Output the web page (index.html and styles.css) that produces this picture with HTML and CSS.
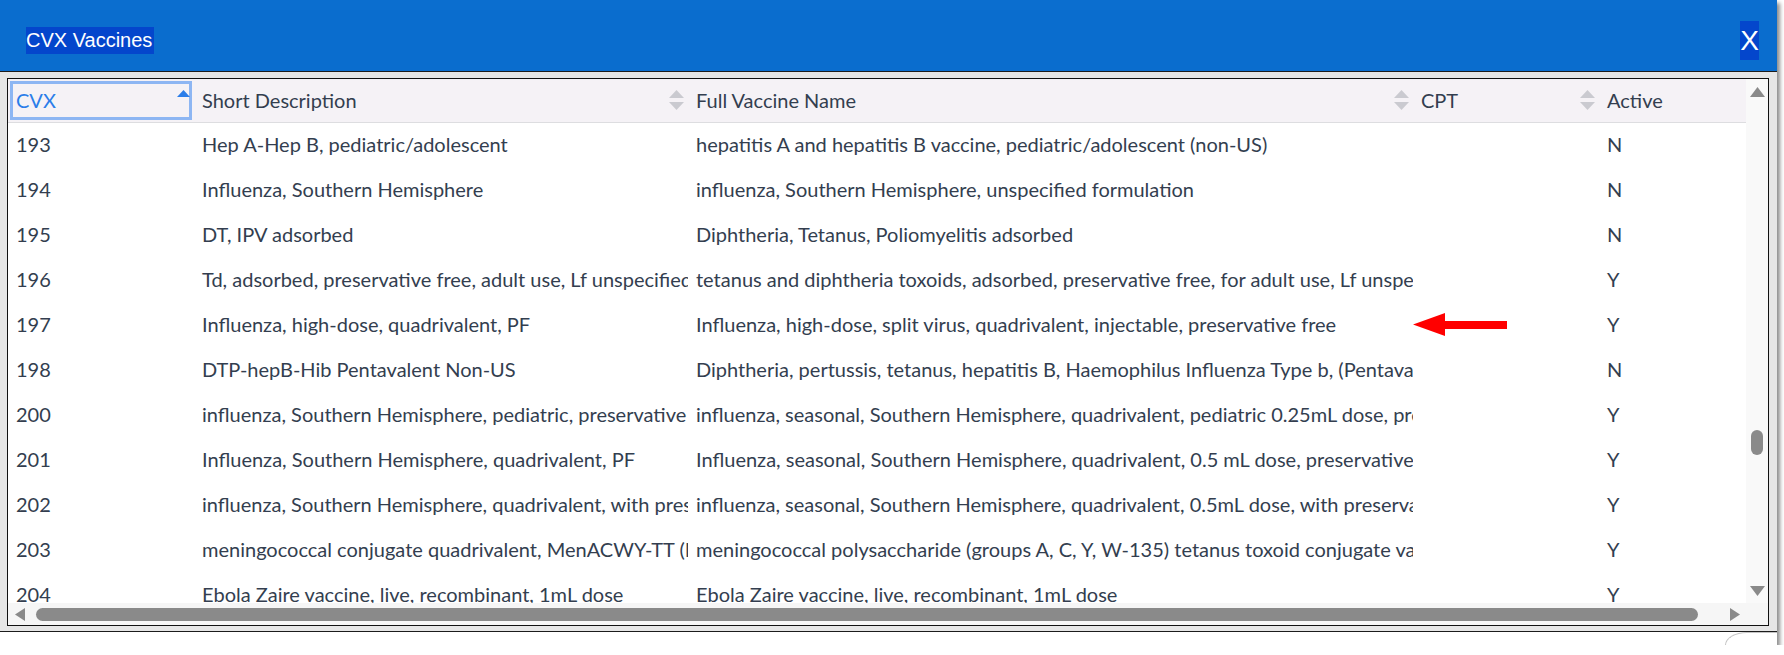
FILE: index.html
```html
<!DOCTYPE html>
<html>
<head>
<meta charset="utf-8">
<title>CVX Vaccines</title>
<link rel="stylesheet" href="styles.css">
</head>
<body>
<div class="window">
  <div class="titlebar">
    <span class="title">CVX Vaccines</span>
    <span class="close">X</span>
  </div>
  <div class="content">
    <div class="gridbox">
      <div class="viewport">
        <div class="row head">
          <div class="th focused"><span class="lbl blue">CVX</span><svg class="asc" viewBox="0 0 13 7" width="13" height="7"><polygon points="0,7 6.5,0 13,7" fill="#2b7de9"/></svg></div>
          <div class="th"><span class="lbl">Short Description</span><svg class="sort" viewBox="0 0 15 21" width="15" height="21"><polygon points="0,8 7.5,0 15,8" /><polygon points="0,12 15,12 7.5,20" /></svg></div>
          <div class="th"><span class="lbl">Full Vaccine Name</span><svg class="sort" viewBox="0 0 15 21" width="15" height="21"><polygon points="0,8 7.5,0 15,8" /><polygon points="0,12 15,12 7.5,20" /></svg></div>
          <div class="th"><span class="lbl">CPT</span><svg class="sort" viewBox="0 0 15 21" width="15" height="21"><polygon points="0,8 7.5,0 15,8" /><polygon points="0,12 15,12 7.5,20" /></svg></div>
          <div class="th"><span class="lbl">Active</span></div>
        </div>
        <div class="row"><div class="td">193</div><div class="td">Hep A-Hep B, pediatric/adolescent</div><div class="td">hepatitis A and hepatitis B vaccine, pediatric/adolescent (non-US)</div><div class="td"></div><div class="td">N</div></div>
        <div class="row"><div class="td">194</div><div class="td">Influenza, Southern Hemisphere</div><div class="td">influenza, Southern Hemisphere, unspecified formulation</div><div class="td"></div><div class="td">N</div></div>
        <div class="row"><div class="td">195</div><div class="td">DT, IPV adsorbed</div><div class="td">Diphtheria, Tetanus, Poliomyelitis adsorbed</div><div class="td"></div><div class="td">N</div></div>
        <div class="row"><div class="td">196</div><div class="td">Td, adsorbed, preservative free, adult use, Lf unspecified</div><div class="td">tetanus and diphtheria toxoids, adsorbed, preservative free, for adult use, Lf unspecified</div><div class="td"></div><div class="td">Y</div></div>
        <div class="row"><div class="td">197</div><div class="td">Influenza, high-dose, quadrivalent, PF</div><div class="td">Influenza, high-dose, split virus, quadrivalent, injectable, preservative free</div><div class="td"></div><div class="td">Y</div></div>
        <div class="row"><div class="td">198</div><div class="td">DTP-hepB-Hib Pentavalent Non-US</div><div class="td">Diphtheria, pertussis, tetanus, hepatitis B, Haemophilus Influenza Type b, (Pentavalent)</div><div class="td"></div><div class="td">N</div></div>
        <div class="row"><div class="td">200</div><div class="td">influenza, Southern Hemisphere, pediatric, preservative free</div><div class="td">influenza, seasonal, Southern Hemisphere, quadrivalent, pediatric 0.25mL dose, preservative free</div><div class="td"></div><div class="td">Y</div></div>
        <div class="row"><div class="td">201</div><div class="td">Influenza, Southern Hemisphere, quadrivalent, PF</div><div class="td">Influenza, seasonal, Southern Hemisphere, quadrivalent, 0.5 mL dose, preservative free</div><div class="td"></div><div class="td">Y</div></div>
        <div class="row"><div class="td">202</div><div class="td">influenza, Southern Hemisphere, quadrivalent, with preservative</div><div class="td">influenza, seasonal, Southern Hemisphere, quadrivalent, 0.5mL dose, with preservative</div><div class="td"></div><div class="td">Y</div></div>
        <div class="row"><div class="td">203</div><div class="td">meningococcal conjugate quadrivalent, MenACWY-TT (MenQuadfi)</div><div class="td">meningococcal polysaccharide (groups A, C, Y, W-135) tetanus toxoid conjugate vaccine .5mL dose, preservative free</div><div class="td"></div><div class="td">Y</div></div>
        <div class="row"><div class="td">204</div><div class="td">Ebola Zaire vaccine, live, recombinant, 1mL dose</div><div class="td">Ebola Zaire vaccine, live, recombinant, 1mL dose</div><div class="td"></div><div class="td">Y</div></div>
      </div>
      <div class="vscroll">
        <svg class="arr" viewBox="0 0 15 10" width="15" height="10"><polygon points="0,10 7.5,0 15,10" /></svg>
        <div class="vtrack"><div class="vthumb"></div></div>
        <svg class="arr" viewBox="0 0 15 10" width="15" height="10"><polygon points="0,0 15,0 7.5,10" /></svg>
      </div>
      <div class="hscroll">
        <svg class="arr" viewBox="0 0 10 13" width="10" height="13"><polygon points="10,0 10,13 0,6.5" /></svg>
        <div class="hthumb"></div>
        <svg class="arr" viewBox="0 0 10 13" width="10" height="13"><polygon points="0,0 10,6.5 0,13" /></svg>
      </div>
      <div class="corner"></div>
    </div>
  </div>
  <div class="footer"><div class="grip"></div></div>
  <svg class="pointer" viewBox="0 0 94 24" width="94" height="24"><polygon points="0,11.5 32,0 32,8 94,8 94,16 32,16 32,23" fill="#ff0000"/></svg>
</div>
</body>
</html>
```

FILE: styles.css
```css
html, body {
  margin: 0;
  padding: 0;
  background: #ffffff;
}

.window {
  position: relative;
  width: 1777px;
  height: 645px;
  display: flex;
  flex-direction: column;
  background: #e6e6e6;
  box-shadow: 3px 3px 4px rgba(0, 0, 0, 0.45);
}

.titlebar {
  height: 61px;
  border-top: 10px solid #0b6ecf;
  background: #0a6dce;
  display: flex;
  align-items: center;
  justify-content: space-between;
  padding: 0 18px 0 26px;
  font-family: "Liberation Sans", Arial, sans-serif;
  color: #ffffff;
  flex: none;
}

.title {
  background: #0446cc;
  font-size: 20px;
  line-height: 27px;
  padding-right: 2px;
}

.close {
  background: #0446cc;
  font-size: 28px;
  line-height: 39px;
  width: 19px;
  text-align: center;
}

.content {
  flex: none;
  height: 548px;
  border-top: 1px solid #1c1c1c;
  border-bottom: 1px solid #1c1c1c;
  padding: 6px 8px 5px 7px;
}

.gridbox {
  height: 546px;
  border: 1px solid #111111;
  background: #ffffff;
  display: grid;
  grid-template-columns: 1738px 22px;
  grid-template-rows: 524px 22px;
}

.viewport {
  overflow: hidden;
  font-family: Lato, "Open Sans", sans-serif;
  font-size: 20px;
  color: #333e4f;
}

.row {
  display: grid;
  grid-template-columns: 186px 494px 725px 186px 147px;
  height: 45px;
}

.row.head {
  height: 43px;
  border-bottom: 1px solid #dddde0;
  background: #f5f2f6;
}

.th {
  display: flex;
  align-items: center;
  padding-left: 8px;
  padding-right: 4px;
  padding-bottom: 2px;
  overflow: hidden;
}

.th .lbl {
  flex: 1;
  white-space: nowrap;
}

.th .lbl.blue {
  color: #2b7de9;
}

.th.focused {
  box-shadow: inset 0 0 0 2px #f5f2f6, inset 0 0 0 5px #8db6f3;
}

.th .asc {
  align-self: flex-start;
  margin-top: 11px;
}

.th .sort {
  fill: #cacad0;
  margin-top: 1px;
}

.td {
  display: flex;
  align-items: center;
  padding-left: 8px;
  padding-bottom: 4px;
  white-space: nowrap;
  overflow: hidden;
}

.vscroll {
  background: #f9f9f9;
  display: flex;
  flex-direction: column;
  align-items: center;
  padding: 8px 0 7px 0;
}

.vscroll .arr {
  fill: #8a8a8a;
  flex: none;
}

.vtrack {
  flex: 1;
  width: 12px;
  padding-top: 333px;
}

.vthumb {
  height: 25px;
  width: 12px;
  border-radius: 6px;
  background: #8a8a8a;
}

.hscroll {
  background: #f6f6f6;
  display: flex;
  align-items: center;
  padding: 0 5px 0 7px;
}

.hscroll .arr {
  fill: #8a8a8a;
  flex: none;
}

.hthumb {
  width: 1662px;
  height: 13px;
  border-radius: 7px;
  background: #8a8a8a;
  margin-left: 11px;
  margin-right: 32px;
}

.corner {
  background: #f6f6f6;
}

.footer {
  flex: 1;
  background: #ffffff;
  display: flex;
  justify-content: flex-end;
}

.grip {
  width: 52px;
  height: 13px;
  border-left: 1px solid #c4c4c4;
  border-top: 1px solid #c4c4c4;
  border-top-left-radius: 22px 13px;
  box-sizing: border-box;
  margin-top: 0;
}

.pointer {
  position: absolute;
  left: 1413px;
  top: 313px;
}
```
